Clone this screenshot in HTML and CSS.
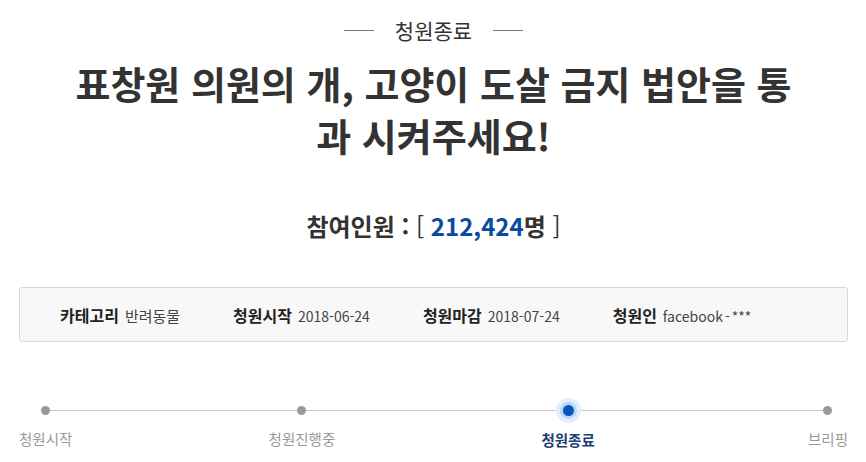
FILE: index.html
```html
<!DOCTYPE html>
<html lang="ko">
<head>
    <meta charset="UTF-8">
    <meta name="viewport" content="width=device-width, initial-scale=1.0">
    <title>청원종료</title>
    <link rel="stylesheet" href="styles.css">
</head>
<body>
    <!-- 청원 상세 -->
    <div class="petition">
        <div class="status"><span>청원종료</span></div>
        <h1 class="title">표창원 의원의 개, 고양이 도살 금지 법안을 통과 시켜주세요!</h1>
        <h2 class="count">참여인원 : <span class="bracket">[</span> <span class="num">212,424</span>명 <span class="bracket">]</span></h2>

        <!-- 청원 정보 -->
        <ul class="info">
            <li><strong>카테고리</strong>반려동물</li>
            <li><strong>청원시작</strong><span class="latin">2018-06-24</span></li>
            <li><strong>청원마감</strong><span class="latin">2018-07-24</span></li>
            <li><strong>청원인</strong><span class="latin">facebook<span class="sep">-</span>***</span></li>
        </ul>

        <!-- 진행 단계 -->
        <ol class="steps">
            <li class="step"><i class="dot"></i><span>청원시작</span></li>
            <li class="step"><i class="dot"></i><span>청원진행중</span></li>
            <li class="step active"><i class="dot"></i><span>청원종료</span></li>
            <li class="step"><i class="dot"></i><span>브리핑</span></li>
        </ol>
    </div>
</body>
</html>
```

FILE: styles.css
```css
/* 기본 */
body {
    margin: 0;
    background: #fff;
    color: #333;
    font-family: "Noto Sans CJK KR", "Noto Sans", sans-serif;
}

.petition {
    padding: 0 18px 0 19px;
}

/* 상단 상태 표시 */
.status {
    display: flex;
    justify-content: center;
    align-items: center;
    gap: 21px;
    padding-top: 15px;
    font-size: 21px;
    line-height: 30px;
    color: #333;
}

.status::before,
.status::after {
    content: "";
    width: 30px;
    height: 1px;
    background: #777;
}

/* 제목 */
.title {
    max-width: 730px;
    margin: 12px auto 0;
    font-size: 38px;
    line-height: 52px;
    font-weight: bold;
    text-align: center;
    word-break: break-all;
    color: #333;
}

/* 참여인원 */
.count {
    margin: 48px 0 0;
    font-size: 24px;
    line-height: 34px;
    font-weight: bold;
    text-align: center;
    color: #333;
}

.count .num {
    color: #0b4a9e;
}

.count .bracket {
    font-weight: normal;
}

/* 정보 박스 */
.info {
    display: flex;
    gap: 53px;
    margin: 44px 0 0;
    padding: 0 40px;
    height: 53px;
    align-items: center;
    list-style: none;
    background: #f8f8f8;
    border: 1px solid #d8d8d8;
    border-radius: 3px;
    font-size: 15px;
    color: #444;
}

.info strong {
    margin-right: 6px;
    font-size: 16px;
    color: #222;
}

.info .latin {
    font-size: 14px;
}

.info .sep {
    margin: 0 2px;
}

/* 진행 단계 */
.steps {
    position: relative;
    display: flex;
    justify-content: space-between;
    margin: 56px 0 0;
    padding: 0;
    list-style: none;
}

.steps::before {
    content: "";
    position: absolute;
    top: 12px;
    left: 26px;
    right: 21px;
    height: 1px;
    background: #c8c8c8;
}

.step {
    display: flex;
    flex-direction: column;
    align-items: center;
    gap: 14px;
    font-size: 14.5px;
    line-height: 20px;
    color: #999;
}

.dot {
    position: relative;
    display: block;
    width: 9px;
    height: 9px;
    margin-top: 8px;
    border-radius: 50%;
    background: #999;
}

.step.active {
    padding: 0 17px 0 10px;
    color: #1b3e75;
    font-weight: bold;
}

.step.active .dot {
    width: 11px;
    height: 11px;
    margin-top: 7px;
    background: #0a56c0;
    box-shadow: 0 0 0 3px #bcd6f6, 0 0 0 7px #e3eefc;
}
```
